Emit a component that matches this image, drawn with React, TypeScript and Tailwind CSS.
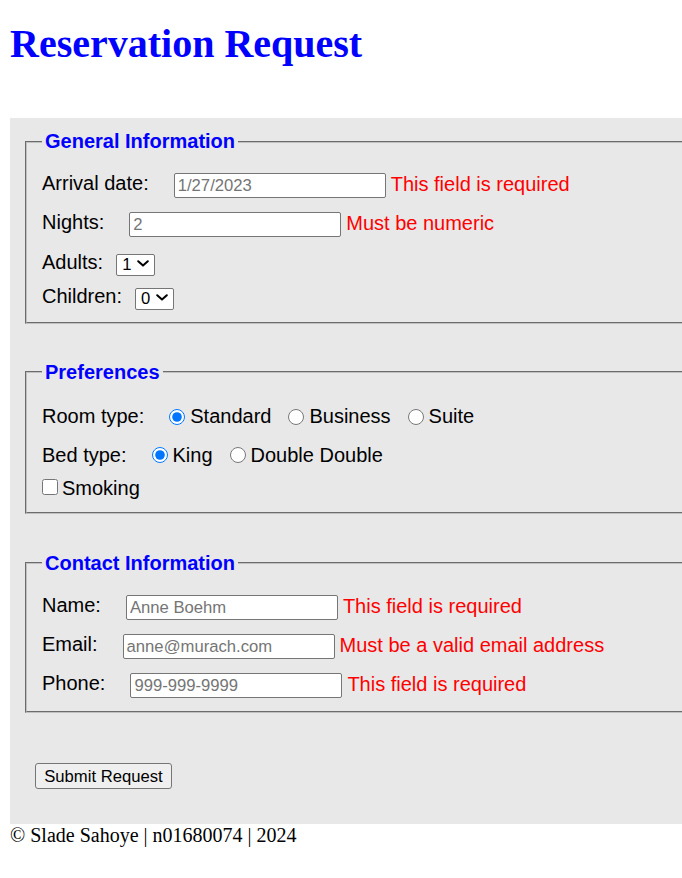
const sans = "font-['Liberation_Sans',Arial,sans-serif]";

function TextRow({
  label,
  value,
  error,
  className,
}: {
  label: string;
  value: string;
  error?: string;
  className?: string;
}) {
  return (
    <div className={`flex items-start ${className ?? ""}`}>
      <label className="text-[20px] leading-[23px] text-black">{label}</label>
      <input
        type="text"
        placeholder={value}
        className="ml-[25px] mt-[1.5px] h-[25px] w-[212px] rounded-[2px] border border-[#767676] bg-white px-[3px] text-[16.67px] text-black placeholder:text-[#757575]"
      />
      {error && (
        <span className="ml-[5px] mt-[1.5px] text-[20px] leading-[23px] text-[#ff0000]">{error}</span>
      )}
    </div>
  );
}

function SelectRow({ label, value, className }: { label: string; value: string; className?: string }) {
  return (
    <div className={`flex items-start ${className ?? ""}`}>
      <label className="text-[20px] leading-[23px] text-black">{label}</label>
      <div className="relative ml-[13px] mt-[2px]">
        <select
          defaultValue={value}
          className="h-[22px] w-[39px] appearance-none rounded-[2px] border border-[#767676] bg-white pl-[5px] text-[16.67px] leading-[20px] text-black"
        >
          {["0", "1", "2", "3", "4"].map((n) => (
            <option key={n} value={n}>
              {n}
            </option>
          ))}
        </select>
        <svg
          className="pointer-events-none absolute left-[21px] top-[7px]"
          width="12"
          height="7"
          viewBox="0 0 12 7"
          fill="none"
        >
          <path d="M1.2 1.2 L6 5.6 L10.8 1.2" stroke="#000" strokeWidth="2" strokeLinecap="round" strokeLinejoin="round" />
        </svg>
      </div>
    </div>
  );
}

function Radio({ label, checked, name, first }: { label: string; checked?: boolean; name: string; first?: boolean }) {
  return (
    <label className={`flex items-center ${first ? "ml-[25px]" : "ml-[17px]"}`}>
      <input type="radio" name={name} defaultChecked={checked} className="h-4 w-4" />
      <span className="ml-[5px] text-[20px] leading-[23px] text-black">{label}</span>
    </label>
  );
}

const fieldsetCls =
  "border-2 [border-style:groove] border-[#c0c0c0] px-[15px] mr-[15px]";
const legendCls = "px-[3px] text-[20px] font-bold leading-[23px] text-[#0000ff]";

export default function App() {
  return (
    <div className={`min-h-[878px] w-full overflow-hidden bg-white pt-[10px] ${sans}`}>
      <h1 className="mx-[10px] mb-[51px] mt-[11px] font-['Liberation_Serif','Times_New_Roman',serif] text-[40px] font-bold leading-[46px] text-[#0000ff]">
        Reservation Request
      </h1>

      <form className="ml-[10px] w-[760px] bg-[#e8e8e8] pb-[35px] pl-[15px] pt-[12px]">
        <fieldset className={`${fieldsetCls} pb-[11px]`}>
          <legend className={legendCls}>General Information</legend>
          <TextRow className="mt-[18.5px]" label="Arrival date:" value="1/27/2023" error="This field is required" />
          <TextRow className="mt-[12.5px]" label="Nights:" value="2" error="Must be numeric" />
          <SelectRow className="mt-[14px]" label="Adults:" value="1" />
          <SelectRow className="mt-[8px]" label="Children:" value="0" />
        </fieldset>

        <fieldset className={`${fieldsetCls} mt-[36.5px] pb-[12px]`}>
          <legend className={legendCls}>Preferences</legend>
          <div className="mt-[21.5px] flex items-center">
            <span className="text-[20px] leading-[23px] text-black">Room type:</span>
            <Radio name="room" label="Standard" checked first />
            <Radio name="room" label="Business" />
            <Radio name="room" label="Suite" />
          </div>
          <div className="mt-[15.5px] flex items-center">
            <span className="text-[20px] leading-[23px] text-black">Bed type:</span>
            <Radio name="bed" label="King" checked first />
            <Radio name="bed" label="Double Double" />
          </div>
          <label className="mt-[10.5px] flex items-center">
            <input type="checkbox" className="mb-[3px] h-4 w-4" />
            <span className="ml-[4px] text-[20px] leading-[23px] text-black">Smoking</span>
          </label>
        </fieldset>

        <fieldset className={`${fieldsetCls} mt-[37.5px] pb-[12.5px]`}>
          <legend className={legendCls}>Contact Information</legend>
          <TextRow className="mt-[19px]" label="Name:" value="Anne Boehm" error="This field is required" />
          <TextRow className="mt-[12.5px]" label="Email:" value="anne@murach.com" error="Must be a valid email address" />
          <TextRow className="mt-[12.5px]" label="Phone:" value="999-999-9999" error="This field is required" />
        </fieldset>

        <button
          type="button"
          className="ml-[10px] mt-[50.5px] h-[26px] w-[137px] rounded-[3px] border border-[#767676] bg-[#efefef] text-center text-[16.67px] text-black"
        >
          Submit Request
        </button>
      </form>

      <footer className="ml-[10px] font-['Liberation_Serif','Times_New_Roman',serif] text-[20px] leading-[23px] text-black">
        © Slade Sahoye | n01680074 | 2024
      </footer>
    </div>
  );
}
